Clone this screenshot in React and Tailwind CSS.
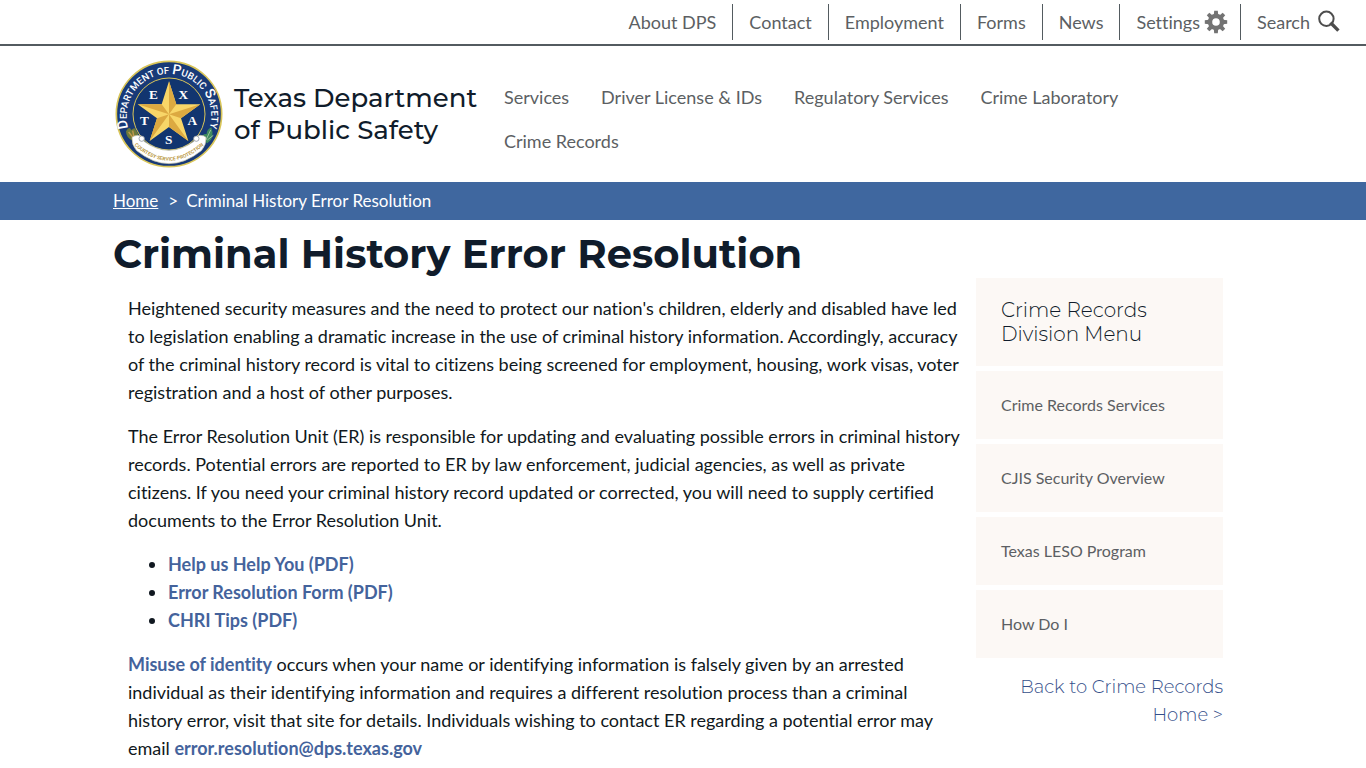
import React from 'react';

const topLinks = ['About DPS', 'Contact', 'Employment', 'Forms', 'News'];

const mainLinks = [
  'Services',
  'Driver License & IDs',
  'Regulatory Services',
  'Crime Laboratory',
  'Crime Records',
];

const divisionLinks = [
  'Crime Records Services',
  'CJIS Security Overview',
  'Texas LESO Program',
  'How Do I',
];

const documents = ['Help us Help You (PDF)', 'Error Resolution Form (PDF)', 'CHRI Tips (PDF)'];

const toothAngles = [0, 45, 90, 135, 180, 225, 270, 315];

const GearIcon = () => (
  <svg viewBox="0 0 24 24" className="h-6 w-6" aria-hidden="true">
    {toothAngles.map((angle) => (
      <path key={angle} d="M9.8 5 L10.2 0.8 H13.8 L14.2 5 Z" fill="#737373" transform={`rotate(${angle} 12 12)`} />
    ))}
    <circle cx="12" cy="12" r="6" fill="none" stroke="#737373" strokeWidth="4.4" />
  </svg>
);

const SearchIcon = () => (
  <svg viewBox="0 0 24 24" className="h-6 w-6" aria-hidden="true">
    <circle cx="8.4" cy="8.8" r="7.2" fill="none" stroke="#4d4d4d" strokeWidth="2" />
    <path d="M13.6 13.8 L19.2 19.4" stroke="#4d4d4d" strokeWidth="3.4" strokeLinecap="square" />
  </svg>
);

const starLetters = [
  { letter: 'E', x: 132, y: 136 },
  { letter: 'X', x: 222, y: 136 },
  { letter: 'T', x: 105, y: 214 },
  { letter: 'A', x: 249, y: 214 },
  { letter: 'S', x: 178, y: 269 },
];

const Seal = () => (
  <svg viewBox="17 18 324 324" className="h-[108px] w-[108px] shrink-0" role="img" aria-label="Department seal">
    <defs>
      <path id="seal-arc" d="M62 236 A127 127 0 1 1 296 236" />
      <path id="ribbon-arc" d="M62 262 Q179 378 296 262" />
    </defs>
    <circle cx="179" cy="180" r="158" fill="#183a78" stroke="#d9c558" strokeWidth="5" />
    <circle cx="179" cy="180" r="108" fill="#12356f" stroke="#d9c558" strokeWidth="3" />
    <text fill="#ffffff" fontFamily="Roboto, sans-serif" fontWeight="500" fontSize="29" textAnchor="middle">
      <textPath href="#seal-arc" startOffset="50%">
        <tspan fontSize="42">D</tspan>EPARTMENT OF <tspan fontSize="42">P</tspan>UBLIC <tspan fontSize="42">S</tspan>AFETY
      </textPath>
    </text>
    {/* star, then the shaded half of each point */}
    <path
      d="M179 82 L201 151 L273 151 L215 193 L237 261 L179 219 L121 261 L143 193 L85 151 L157 151 Z"
      fill="#f8d668"
    />
    <path
      d="M179 82 L179 181 L201 151 Z M273 151 L179 181 L215 193 Z M237 261 L179 181 L179 219 Z M121 261 L179 181 L143 193 Z M85 151 L179 181 L157 151 Z"
      fill="#dca941"
    />
    <g fill="#ffffff" fontFamily="Liberation Serif, serif" fontWeight="700" fontSize="40" textAnchor="middle">
      {starLetters.map(({ letter, x, y }) => (
        <text key={letter} x={x} y={y}>{letter}</text>
      ))}
    </g>
    <path d="M50 232 q10 -18 16 -4 q12 -12 14 2 q10 8 4 20 l-14 10 q-20 -8 -20 -28 Z" fill="#6d7a3a" />
    <path d="M58 234 l14 18 M70 230 l4 20" stroke="#c59a4b" strokeWidth="4" />
    <path d="M306 220 q-14 6 -14 20 q-14 -2 -16 14 l18 14 q24 -14 12 -48 Z" fill="#3f8a5f" />
    <path d="M304 228 l-14 30 M312 244 l-18 14" stroke="#9bc29d" strokeWidth="3" />
    <path
      d="M68 250 Q84 238 104 250 L104 262 Q179 316 254 262 L254 250 Q276 238 290 250 Q292 272 276 290 Q179 368 82 290 Q66 272 68 250 Z"
      fill="#ffffff"
      stroke="#b8b8a0"
      strokeWidth="2"
    />
    <circle cx="97" cy="254" r="8" fill="#ffffff" stroke="#77808f" strokeWidth="2" />
    <circle cx="261" cy="254" r="8" fill="#ffffff" stroke="#77808f" strokeWidth="2" />
    <text fill="#b08a1c" fontFamily="Roboto, sans-serif" fontWeight="500" fontSize="15" textAnchor="middle">
      <textPath href="#ribbon-arc" startOffset="50%">COURTESY·SERVICE·PROTECTION</textPath>
    </text>
  </svg>
);

const TopBar = () => (
  <nav aria-label="Utility" className="flex justify-end border-b-2 border-[#535b60] py-1 pr-2 text-lg text-[#5c5f63]">
    {topLinks.map((label) => (
      <a key={label} href="#" className="flex h-9 items-center border-r border-[#535b60] px-4">
        {label}
      </a>
    ))}
    <button type="button" className="flex h-9 items-center gap-1 border-r border-[#535b60] pl-4 pr-3">
      Settings
      <GearIcon />
    </button>
    <button type="button" className="flex h-9 items-center gap-2 px-4">
      Search
      <SearchIcon />
    </button>
  </nav>
);

const Header = () => (
  <header className="mx-auto flex max-w-[1140px] items-center py-3.5 pl-0.5">
    <a href="#" className="flex w-[373px] shrink-0 items-center gap-[11px]">
      <Seal />
      <span className="whitespace-nowrap font-[Montserrat,sans-serif] text-[26px] font-medium leading-8 text-[#101c2b]">
        Texas Department
        <br />
        of Public Safety
      </span>
    </a>
    <nav aria-label="Main" className="flex flex-wrap pt-2.5 text-lg text-[#5c5f63]">
      {mainLinks.map((label) => (
        <a key={label} href="#" className="flex h-11 items-center px-4">
          {label}
        </a>
      ))}
    </nav>
  </header>
);

const SideMenu = () => (
  <aside className="w-[247px] shrink-0">
    <h2 className="bg-[#fcf8f5] px-[25px] py-5 font-[Montserrat,sans-serif] text-xl font-light leading-6 text-[#101c2b]">
      Crime Records
      <br />
      Division Menu
    </h2>
    <ul>
      {divisionLinks.map((label) => (
        <li key={label} className="mt-[5px]">
          <a href="#" className="flex h-[68px] items-center bg-[#fcf8f5] px-[25px] text-base text-[#5c5f63]">
            {label}
          </a>
        </li>
      ))}
    </ul>
    <a
      href="#"
      className="mt-[15px] block text-right font-[Montserrat,sans-serif] text-lg font-light leading-7 text-[#354f8a]"
    >
      Back to Crime Records Home &gt;
    </a>
  </aside>
);

const App = () => {
  return (
    <div className="bg-white font-[Lato,sans-serif] text-[#101820] [font-variant-ligatures:no-common-ligatures]">
      <TopBar />
      <Header />

      <nav aria-label="Breadcrumb" className="bg-[#3f679f] text-[17px] text-white">
        <ol className="mx-auto flex h-[38px] max-w-[1140px] items-center">
          <li>
            <a href="#" className="underline">Home</a>
          </li>
          <li className="pl-2.5 pr-2" aria-hidden="true">&gt;</li>
          <li>Criminal History Error Resolution</li>
        </ol>
      </nav>

      <div className="mx-auto max-w-[1140px]">
        <h1 className="pt-2.5 font-[Montserrat,sans-serif] text-[40px] font-bold leading-[48px] text-[#101c2b]">
          Criminal History Error Resolution
        </h1>
        <div className="flex justify-between pr-[30px]">
          <main className="w-[848px] pl-[15px] pt-4 text-lg leading-7">
            <p className="mb-4">
              Heightened security measures and the need to protect our nation's children, elderly and disabled have led
              to legislation enabling a dramatic increase in the use of criminal history information. Accordingly,
              accuracy of the criminal history record is vital to citizens being screened for employment, housing, work
              visas, voter registration and a host of other purposes.
            </p>
            <p className="mb-4">
              The Error Resolution Unit (ER) is responsible for updating and evaluating possible errors in criminal
              history records. Potential errors are reported to ER by law enforcement, judicial agencies, as well as
              private citizens. If you need your criminal history record updated or corrected, you will need to supply
              certified documents to the Error Resolution Unit.
            </p>
            <ul className="mb-4 list-disc pl-10">
              {documents.map((name) => (
                <li key={name}>
                  <a href="#" className="font-bold text-[#44639c]">{name}</a>
                </li>
              ))}
            </ul>
            <p>
              <a href="#" className="font-bold text-[#44639c]">Misuse of identity</a> occurs when your name or
              identifying information is falsely given by an arrested individual as their identifying information and
              requires a different resolution process than a criminal history error, visit that site for details.
              Individuals wishing to contact ER regarding a potential error may email{' '}
              <a href="mailto:error.resolution@dps.texas.gov" className="font-bold text-[#44639c]">
                error.resolution@dps.texas.gov
              </a>
            </p>
          </main>
          <SideMenu />
        </div>
      </div>
    </div>
  );
};

export default App;
